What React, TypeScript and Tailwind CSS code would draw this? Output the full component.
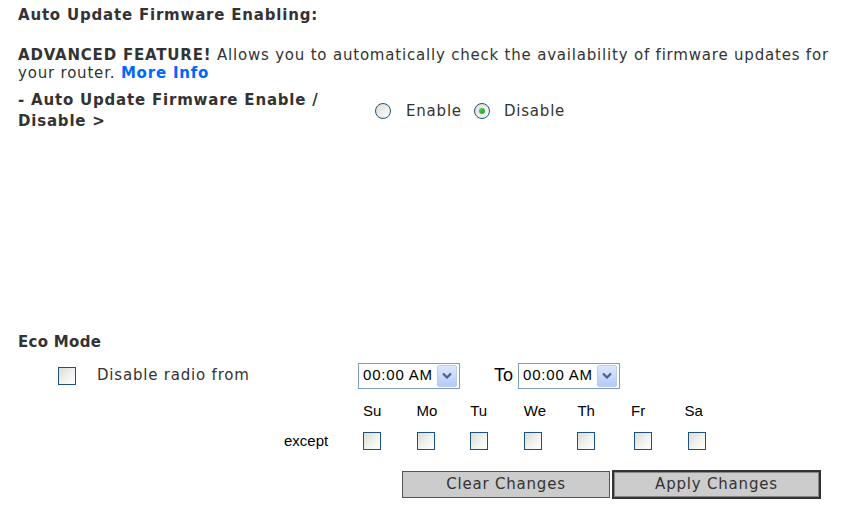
import React from "react";

const verdana = { fontFamily: '"DejaVu Sans", Verdana, sans-serif' };
const arial = { fontFamily: '"Liberation Sans", Arial, sans-serif' };

const DAYS = ["Su", "Mo", "Tu", "We", "Th", "Fr", "Sa"];

function Check() {
  return (
    <span className="block w-[18px] h-[18px] border border-[#1c5180] bg-gradient-to-br from-[#dcdcd6] via-[#f0f0ec] to-white" />
  );
}

function Radio({ checked }: { checked?: boolean }) {
  return (
    <span className="flex items-center justify-center w-[16px] h-[16px] rounded-full border border-[#1c5180] bg-gradient-to-br from-[#dcdcd6] to-white">
      {checked && (
        <span className="block w-[6px] h-[6px] rounded-full bg-gradient-to-br from-[#5fd35f] to-[#1a9a1a]" />
      )}
    </span>
  );
}

function TimeSelect() {
  return (
    <div
      className="flex items-center justify-between w-[102px] h-[26px] border border-[#7f9db9] bg-white pl-[4px] pr-[2px] text-[15px] text-black"
      style={arial}
    >
      <span>00:00 AM</span>
      <span className="flex items-center justify-center w-[20px] h-[22px] rounded-[2px] border border-[#b9cdf5] bg-gradient-to-b from-[#dce7fd] to-[#b5cbf5]">
        <svg width="10" height="7" viewBox="0 0 10 7">
          <path d="M1 1.5 L5 5.5 L9 1.5" fill="none" stroke="#4d6185" strokeWidth="2.2" />
        </svg>
      </span>
    </div>
  );
}

export default function App() {
  return (
    <div
      className="w-[865px] h-[506px] bg-white text-[#333] pl-[18px] overflow-hidden text-[15px] tracking-[0.8px]"
      style={verdana}
    >
      {/* Firmware */}
      <div className="pt-[6px] leading-[18px] font-bold">Auto Update Firmware Enabling:</div>
      <div className="mt-[22px] leading-[18px] w-[825px]">
        <div>
          <b>ADVANCED FEATURE!</b>{" "}
          <span>Allows you to automatically check the availability of firmware updates for</span>
        </div>
        <div>
          <span>your router.</span> <a className="font-bold text-[#0066ff]">More Info</a>
        </div>
      </div>
      <div className="mt-[8px] flex items-center">
        <div className="w-[357px] leading-[21px] font-bold">
          <div>- Auto Update Firmware Enable /</div>
          <div>Disable &gt;</div>
        </div>
        <div className="flex items-center">
          <Radio />
          <span className="ml-[15px]">Enable</span>
          <span className="ml-[12px]">
            <Radio checked />
          </span>
          <span className="ml-[14px]">Disable</span>
        </div>
      </div>

      {/* Eco mode */}
      <div className="mt-[201px] leading-[18px] font-bold tracking-[0.3px]">Eco Mode</div>
      <div className="mt-[11px] flex items-center">
        <span className="ml-[40px]">
          <Check />
        </span>
        <span className="ml-[21px] w-[261px]">Disable radio from</span>
        <TimeSelect />
        <span className="ml-[34px] mr-[5px] text-[18px] tracking-normal text-black" style={arial}>
          To
        </span>
        <TimeSelect />
      </div>
      <div className="mt-[14px] flex tracking-normal text-black leading-[16px]" style={arial}>
        <div className="w-[345px]" />
        {DAYS.map((d) => (
          <span key={d} className="w-[53.6px]">
            {d}
          </span>
        ))}
      </div>
      <div className="mt-[11px] flex items-center tracking-normal text-black" style={arial}>
        <span className="w-[345px] pl-[266px]">except</span>
        {DAYS.map((d, i) => (
          <span key={d} className={`w-[53.6px] ${i >= 5 ? "pl-[3px]" : ""}`}>
            <Check />
          </span>
        ))}
      </div>
      <div className="mt-[17px] flex items-center pl-[384px]">
        <button className="w-[208px] h-[27px] bg-[#cccccc] border border-[#555] text-[#333] tracking-[0.8px]" style={verdana}>
          Clear Changes
        </button>
        <button
          className="ml-[2px] w-[209px] h-[29px] bg-[#cccccc] border-2 border-[#333] outline outline-1 outline-[#888] -outline-offset-3 text-[#333] tracking-[0.8px]"
          style={verdana}
        >
          Apply Changes
        </button>
      </div>
    </div>
  );
}
